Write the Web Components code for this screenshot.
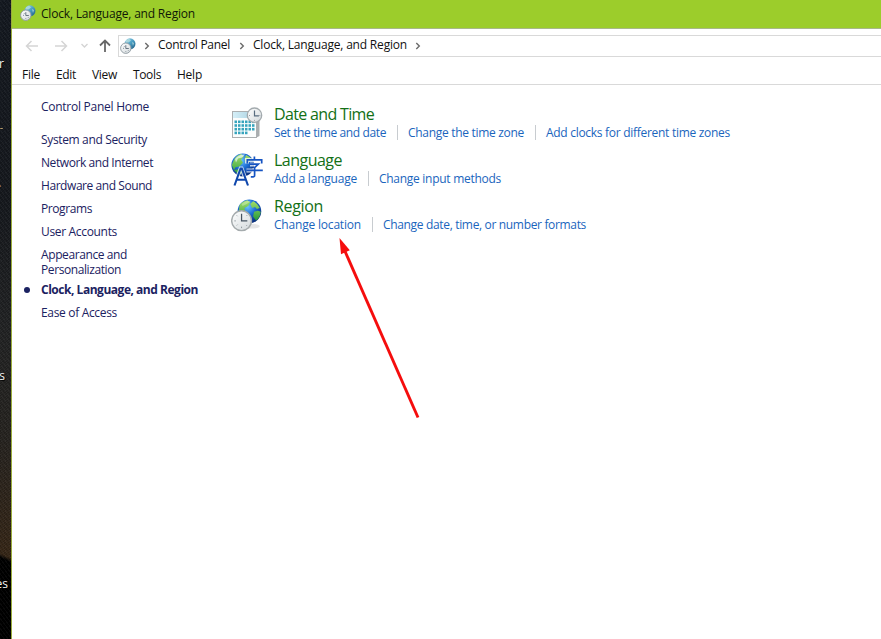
<!DOCTYPE html>
<html lang="en"><head><meta charset="utf-8"><title>Clock, Language, and Region</title>
<style>
body{margin:0;width:881px;height:639px;overflow:hidden;background:#fff;font:12px/15px "Open Sans","Noto Sans",sans-serif;color:#111}
</style></head><body>
<cp-screen></cp-screen>
<script>
const define=(name,markup,setup)=>customElements.define(name,class extends HTMLElement{
  connectedCallback(){
    if(this.shadowRoot)return;
    this.attachShadow({mode:'open'}).innerHTML=typeof markup==='function'?markup(this):markup;
    if(setup)setup(this);
  }
});

/* Text run whose tracking is adjusted to fill a given width. */
define('fit-text','<style>:host{display:inline-block;white-space:nowrap;flex:none}span{display:inline-block}</style><span><slot></slot></span>',el=>{
  const s=el.shadowRoot.querySelector('span'),w=+el.getAttribute('w');
  s.style.letterSpacing='0';
  s.style.letterSpacing=((w-s.getBoundingClientRect().width)/el.textContent.length)+'px';
  el.style.width=w+'px';
});

const globe=`<radialGradient id="g" cx=".42" cy=".3" r=".75"><stop offset="0" stop-color="#6cc4fb"/><stop offset=".45" stop-color="#1d6fd6"/><stop offset="1" stop-color="#06246f"/></radialGradient>
<linearGradient id="l" x2="0" y2="1"><stop offset="0" stop-color="#a6e06a"/><stop offset="1" stop-color="#259a3c"/></linearGradient>`;
const face=`<linearGradient id="c" x2="1" y2="1"><stop offset="0" stop-color="#fff"/><stop offset="1" stop-color="#d3d9dc"/></linearGradient>`;
const icons={
small:`<svg width="16" height="16" viewBox="0 0 16 16"><defs>${face}<linearGradient id="g" x2="1" y2="1"><stop offset="0" stop-color="#a5d9ee"/><stop offset=".5" stop-color="#4b9fc4"/><stop offset="1" stop-color="#1b587f"/></linearGradient></defs><circle cx="10" cy="5.8" r="5.5" fill="url(#g)"/><path d="M6 2.2 9 .8l2 1.4-2 2-3 .5zM12 4l2 1-1 3z" fill="#b9e0df" opacity=".75"/><circle cx="5.8" cy="10.2" r="5.2" fill="url(#c)" stroke="#8d999f" stroke-width=".9"/><path d="M5.8 7.2v3.3h3M3 10.3h.8M5.8 13v.6M3.8 8l.6.6M8 12.2l.5.5" fill="none" stroke="#5a6a76" stroke-width=".9"/></svg>`,
date:`<svg width="34" height="34" viewBox="0 0 34 34"><defs>${face}<linearGradient id="h" x2="1"><stop offset="0" stop-color="#d5eff8"/><stop offset="1" stop-color="#a5cede"/></linearGradient></defs><path d="M2.5 30.5h23l3-1.5V13l-3-2" fill="#a9adaf"/><rect x="1.5" y="4.5" width="24" height="26" fill="#fbfdfd" stroke="#abafb1"/><path d="M2 5h23v6H2z" fill="url(#h)"/><g fill="#36a4bd">${[13.5,17.2,20.9,24.6].map((y,r)=>[3.5,7,10.5,14,17.5,21].map((x,i)=>r==3&&i>3?'':`<rect x="${x}" y="${y}" width="2.5" height="2.6"/>`).join('')).join('')}</g><circle cx="23.5" cy="8.2" r="7.2" fill="url(#c)" stroke="#a3aaae" stroke-width="1.3"/><path d="M23.5 3.4v5.4h4.4" fill="none" stroke="#596d80" stroke-width="1.2"/><path d="M18 8.5h1M28.3 8.5h1M23.5 12.9v1" stroke="#98a2aa"/></svg>`,
lang:`<svg width="34" height="34" viewBox="0 0 34 34"><defs>${globe}</defs><circle cx="11.8" cy="12" r="11.4" fill="url(#g)"/><path d="M2 9Q4 3 10 1l3 2.2-3 3.2 2 3-3.5 4-4 .8L3 17 .8 12zM15 2l4 2.3 3 4-3-.2-3 2.4-2.5-3.8zM3 17l6-1 3 3-4 3z" fill="url(#l)"/><path d="M4 6q4-5 10-4.500l-3 3-4 1-2 4z" fill="#effbff" opacity=".7"/><g fill="none" stroke="#fff" stroke-width="4" opacity=".75"><path d="M3.500 32 9.600 15.500h1L16.800 32M6 26.5h8.500M16 10.500V7h14.500v3.500M19 11.500h8M23.500 15v9M15.500 17.500h15.500"/></g><path d="M3.500 32.500 9.600 15.500h1.200L17 32.500M5.800 26.700h8.800" fill="none" stroke="#1048ad" stroke-width="2.1"/><path d="M23.400 3.500v3M16.300 10.500V6.800h14.400v3.700M18.700 11.100h8.600l-3.700 3.400v8q0 1.300-1.300 1.300h-2.500M15.300 17.400h16.500" fill="none" stroke="#1654c2" stroke-width="1.7"/></svg>`,
region:`<svg width="34" height="34" viewBox="0 0 34 34"><defs>${globe}${face}</defs><g transform="translate(0 .3) scale(.96)"><ellipse cx="21" cy="28" rx="9" ry="2.5" fill="#999" opacity=".25"/><circle cx="19.200" cy="12.500" r="12.3" fill="url(#g)"/><path d="M9 6q3-4 8-5l3 2-2 4-4 2 1 4-5 3-2-3zM23 2q5 2 7 7l-3 1-2-2-3 1-2-4zM24 13l4-1 3 1q-1 7-5 9l-3-4z" fill="url(#l)"/><path d="M11 5q4-4 10-3.5Q17 5 12 7z" fill="#fff" opacity=".3"/><circle cx="11" cy="22.300" r="10.3" fill="url(#c)" stroke="#a5abad" stroke-width="1.5"/><path d="M11 15V22.500h6" fill="none" stroke="#465461" stroke-width="1.3"/><path d="M3.5 22.500H5M11 28.5V30M6 16.8l.8.8M16 27l.8.8M6 27.2l.8-.8M16 17.4l.8-.8" stroke="#8c969c"/></g></svg>`};
define('cp-icon',el=>`<style>:host{display:block;flex:none;line-height:0}svg{display:block}</style>${icons[el.getAttribute('name')]}`);

define('desktop-strip',`<style>:host{display:grid;grid-template-rows:56px 312px 208px 1fr;width:11px;height:639px;overflow:hidden;color:#f4f4f4;
background:repeating-linear-gradient(53deg,#ffffff0a 0 1px,#0000 1px 3px),repeating-linear-gradient(-37deg,#0003 0 1px,#0000 1px 2px),linear-gradient(#b59a6a,#b59a6a) 0 128px/3px 1px no-repeat,linear-gradient(#8a5a3a,#8a5a3a) 0 185px/1px 2px no-repeat,linear-gradient(25deg,#000 0 74px,#0000 78px),linear-gradient(#151a22 0,#171a1f 200px,#242526 330px,#292622 440px,#3a2918 560px)}
span{line-height:16px;white-space:nowrap;text-shadow:1px 1px 1px #000;width:8px;display:flex;justify-content:flex-end}</style>
<span></span><span style="width:4px">r</span><span style="width:5px">s</span><span>es</span>`);

define('title-bar',`<style>:host{display:flex;height:28px;background:#9ccd2b;border-bottom:1px solid #a8b889;box-sizing:content-box;padding-left:8px;align-items:center;gap:5px}cp-icon{margin-bottom:2px}fit-text{color:#101806;margin-bottom:2px}</style>
<cp-icon name="small"></cp-icon><fit-text w="154">Clock, Language, and Region</fit-text>`);

define('address-bar',`<style>:host{display:flex;height:22px;margin-top:6px}
.nav{width:106px;flex:none;display:block}
.box{box-sizing:border-box;flex:1;height:22px;border:1px solid #d9d9d9;border-right:0;display:flex;align-items:center;padding-left:1px}
.box fit-text{margin-top:-4px}.ch{width:6px;height:8px;flex:none;display:block;margin-top:-1px}</style>
<svg class="nav" viewBox="0 0 106 22" fill="none"><g stroke="#d5d5d5" stroke-width="1.5"><path d="M26 11H14.5M19.5 6l-5 5 5 5"/><path d="M43 11h11.5M49.5 6l5 5-5 5"/></g><path d="m69.5 9 3 3 3-3" stroke="#d4d4d4" stroke-width="1.4"/><path d="M93 17V5.5M88 10.5l5-5 5 5" stroke="#686868" stroke-width="1.8"/></svg>
<div class="box"><cp-icon name="small"></cp-icon>
<svg class="ch" style="margin-left:8px" viewBox="0 0 6 8"><path d="m1.3 1 3 3-3 3" fill="none" stroke="#6b6b6b" stroke-width="1.4"/></svg>
<fit-text w="72" style="margin-left:8px">Control Panel</fit-text>
<svg class="ch" style="margin-left:9px" viewBox="0 0 6 8"><path d="m1.3 1 3 3-3 3" fill="none" stroke="#6b6b6b" stroke-width="1.4"/></svg>
<fit-text w="154" style="margin-left:8px">Clock, Language, and Region</fit-text>
<svg class="ch" style="margin-left:8px" viewBox="0 0 6 8"><path d="m1.3 1 3 3-3 3" fill="none" stroke="#6b6b6b" stroke-width="1.4"/></svg></div>`);

define('menu-bar',`<style>:host{display:flex;box-sizing:border-box;height:28px;padding:10px 0 0 10px;border-bottom:1px solid #d9d9d9;gap:16px;color:#111}</style>
<fit-text w="18">File</fit-text><fit-text w="20">Edit</fit-text><fit-text w="25">View</fit-text><fit-text w="28">Tools</fit-text><fit-text w="25">Help</fit-text>`);

define('side-nav',`<style>:host{display:flex;flex-direction:column;align-items:flex-start;width:190px;padding:14px 0 0 29px;box-sizing:border-box;color:#1b2261;flex:none}
fit-text{height:15px;display:block;margin-bottom:8px}.home{margin-bottom:18px}.t{margin-bottom:0}.e{margin-bottom:5px}
.cur{display:flex;align-items:center;gap:11px;margin:0 0 8px -17px;font-weight:bold}.cur fit-text{margin:0}.cur i{width:6px;height:6px;border-radius:50%;background:#1b2261}</style>
<fit-text class="home" w="108">Control Panel Home</fit-text>
<fit-text w="106">System and Security</fit-text><fit-text w="112">Network and Internet</fit-text><fit-text w="111">Hardware and Sound</fit-text><fit-text w="51">Programs</fit-text><fit-text w="76">User Accounts</fit-text>
<fit-text class="t" w="86">Appearance and</fit-text><fit-text class="e" w="80">Personalization</fit-text>
<div class="cur"><i></i><fit-text w="157">Clock, Language, and Region</fit-text></div><fit-text w="76">Ease of Access</fit-text>`);

define('cp-category',el=>`<style>:host{display:flex;height:46px;gap:9px}
cp-icon{margin-top:2px}
.h{font-size:16px;line-height:18px;height:20px;color:#137016;display:flex}
.l{display:flex;height:15px;color:#1a65bd}
::slotted(fit-text){padding-right:11px}::slotted(fit-text:not(:first-of-type)){border-left:1px solid #c8ccd0;padding-left:10px}</style>
<cp-icon name="${el.getAttribute('icon')}"></cp-icon><div><div class="h"><fit-text w="${el.getAttribute('w')}">${el.getAttribute('heading')}</fit-text></div><div class="l"><slot></slot></div></div>`);

define('category-list',`<style>:host{display:block;padding:20px 0 0 29px}</style>
<cp-category icon="date" heading="Date and Time" w="100"><fit-text w="112">Set the time and date</fit-text><fit-text w="116">Change the time zone</fit-text><fit-text w="184">Add clocks for different time zones</fit-text></cp-category>
<cp-category icon="lang" heading="Language" w="68"><fit-text w="83">Add a language</fit-text><fit-text w="122">Change input methods</fit-text></cp-category>
<cp-category icon="region" heading="Region" w="49"><fit-text w="87">Change location</fit-text><fit-text w="203">Change date, time, or number formats</fit-text></cp-category>`);

define('pointer-arrow',`<style>:host{position:absolute;left:330px;top:230px;pointer-events:none}svg{display:block}</style>
<svg width="100" height="200"><path d="M14 19 88 187.500" stroke="#f50d0d" stroke-width="2.900"/><path d="M9.500 8 19.800 20.300 11 24.200z" fill="#f50d0d"/></svg>`);

define('control-window',`<style>:host{display:block;box-sizing:border-box;background:#fff;border-left:1px solid #9aac3c;height:639px;overflow:hidden}.main{display:flex}</style>
<title-bar></title-bar><address-bar></address-bar><menu-bar></menu-bar><div class="main"><side-nav></side-nav><category-list></category-list></div>`);

define('cp-screen',`<style>:host{display:grid;grid-template-columns:11px 1fr;width:881px;height:639px;position:relative;overflow:hidden}</style><desktop-strip></desktop-strip><control-window></control-window><pointer-arrow></pointer-arrow>`);
</script></body></html>
